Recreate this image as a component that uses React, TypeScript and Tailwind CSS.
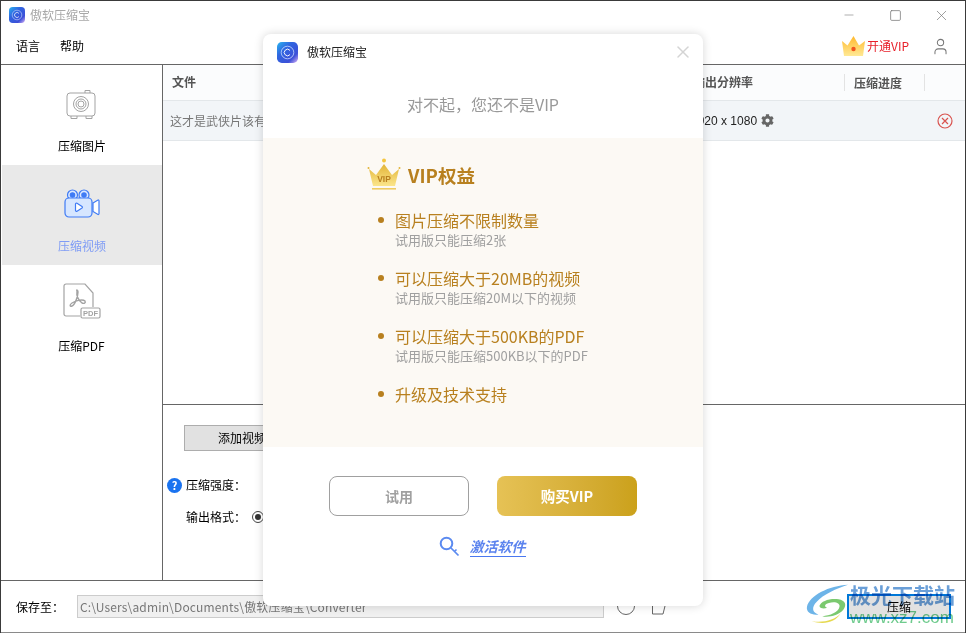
import { Minus, Square, X, User } from "lucide-react";
import { FaCog } from "react-icons/fa";

const benefits = [
  { title: "图片压缩不限制数量", note: "试用版只能压缩2张" },
  { title: "可以压缩大于20MB的视频", note: "试用版只能压缩20M以下的视频" },
  { title: "可以压缩大于500KB的PDF", note: "试用版只能压缩500KB以下的PDF" },
  { title: "升级及技术支持", note: "" },
];

const AppLogo = ({ size }: { size: number }) => (
  <svg width={size} height={size} viewBox="0 0 22 22">
    <defs>
      <linearGradient id="logoGrad" x1="0" y1="0" x2="1" y2="1">
        <stop offset="0" stopColor="#2bb6f0" />
        <stop offset="0.35" stopColor="#2f66e0" />
        <stop offset="0.75" stopColor="#3d50d8" />
        <stop offset="1" stopColor="#e0b8f8" />
      </linearGradient>
    </defs>
    <rect width="22" height="22" rx="5" fill="url(#logoGrad)" />
    <circle cx="11" cy="11" r="6.6" fill="none" stroke="#cfe0ff" strokeWidth="0.8" />
    <path d="M13.6 8.8a3.4 3.4 0 1 0 0 4.4" fill="none" stroke="#fff" strokeWidth="1" />
  </svg>
);

const CameraIcon = () => (
  <svg width="32" height="30" viewBox="0 0 32 30" fill="none" stroke="#a3a3a3" strokeWidth="1">
    <rect x="1" y="4" width="28" height="23" rx="3" />
    <path d="M19 4V1.500h5V4M5 27v2.500h6V27M20 27v2.500h6V27" />
    <circle cx="15" cy="15" r="7.500" />
    <circle cx="15" cy="15" r="5" />
    <circle cx="15" cy="15" r="3" />
  </svg>
);

const VideoIcon = () => (
  <svg width="36" height="30" viewBox="0 0 36 30" fill="none" stroke="#3f7bf5" strokeWidth="1.200">
    <circle cx="8.500" cy="6" r="5" fill="#dbe8ff" />
    <circle cx="8.500" cy="6" r="2.200" fill="#3f7bf5" />
    <circle cx="20" cy="6" r="5" fill="#dbe8ff" />
    <circle cx="20" cy="6" r="2.200" fill="#3f7bf5" />
    <rect x="1" y="9" width="27" height="19" rx="4" fill="#d6e6ff" />
    <path d="M11.500 15a1 1 0 0 1 1.500-.8l5 3.300a1 1 0 0 1 0 1.600l-5 3.100a1 1 0 0 1-1.500-.8z" fill="#fff" />
    <path d="M29 14l5-3a.8.8 0 0 1 1 .8v13a.8.8 0 0 1-1 .7l-5-3z" fill="#fff" />
  </svg>
);

const PdfIcon = () => (
  <svg width="38" height="36" viewBox="0 0 38 36" fill="none" stroke="#a3a3a3" strokeWidth="1.200">
    <path d="M17 33H3a2 2 0 0 1-2-2V3a2 2 0 0 1 2-2h19l8 9v14" />
    <path d="M14 8c-1 5 2 10 5 12 2 1 4 0 3-2-2-2-8-1-13 2-3 2-2 4 0 3 3-1 6-10 6-14 0-2-2-3-1-1z" strokeWidth="1.400" />
    <rect x="18" y="25" width="19" height="10" rx="1.500" fill="#fff" />
    <text x="27.500" y="33" textAnchor="middle" fontSize="7.500" fontWeight="700" fill="#a3a3a3" stroke="none" fontFamily="Liberation Sans, sans-serif">PDF</text>
  </svg>
);

const SmallCrown = () => (
  <svg width="23" height="20" viewBox="0 0 23 20">
    <defs>
      <linearGradient id="topCrown" x1="0" y1="0" x2="0" y2="1">
        <stop offset="0" stopColor="#ffb92e" />
        <stop offset="1" stopColor="#ffe995" />
      </linearGradient>
    </defs>
    <path d="M0 5l5.500 4.500L11.500 0l5.500 9.500L23 5l-2 15H2z" fill="url(#topCrown)" />
    <circle cx="11.500" cy="13" r="2.200" fill="#f2551d" />
  </svg>
);

const GoldCrown = () => (
  <svg width="34" height="34" viewBox="0 0 34 34">
    <defs>
      <linearGradient id="goldCrown" x1="0" y1="0" x2="0" y2="1">
        <stop offset="0" stopColor="#e2b437" />
        <stop offset="1" stopColor="#fbe58b" />
      </linearGradient>
    </defs>
    <circle cx="17" cy="2.500" r="2" fill="#f5c63f" />
    <circle cx="1.500" cy="10" r="1" fill="#e2b437" />
    <circle cx="32.500" cy="10" r="1" fill="#e2b437" />
    <path d="M2 11l7 6 8-11 8 11 7-6-4 17H6z" fill="url(#goldCrown)" />
    <rect x="5" y="30" width="24" height="1.600" fill="#efcb62" />
    <text x="17" y="24" textAnchor="middle" fontSize="8.500" fontWeight="700" fill="#b8801f" fontFamily="Liberation Sans, sans-serif">VIP</text>
  </svg>
);

const KeyIcon = () => (
  <svg width="21" height="21" viewBox="0 0 21 21" fill="none" stroke="#5b8af0" strokeWidth="2">
    <circle cx="7.500" cy="7.500" r="5.800" />
    <path d="M12 12l7.500 7.500M15.500 15.500l2-2" strokeWidth="1.700" />
  </svg>
);

const Watermark = () => (
  <div className="absolute left-[806px] top-[580px] flex items-start pointer-events-none mix-blend-multiply">
    <svg width="44" height="44" viewBox="0 0 46 42" className="mt-[2px]">
      <path d="M44 1C24 2 4 12 1 24c-1 6 5 9 12 8C6 30 6 24 11 19 18 11 32 5 44 1z" fill="#6db4e8" />
      <path d="M14 23c2-5 10-8 20-7 7 1 9 6 5 11-5 6-14 8-22 7 8-1 17-4 18-10 1-4-5-6-11-4-5 1-5 4-2 5-3 1-7 1-8-2z" fill="#7bc96f" />
      <path d="M6 39c12 2 24-1 30-8-5 9-17 12-30 8z" fill="#e6d94f" />
    </svg>
    <div className="flex flex-col">
      <span className="text-[21px] leading-[28px] font-bold text-[#6a9fd8]">极光下载站</span>
      <span className="text-[17px] leading-[18px] mt-[1px] text-[#6fcb8e] font-['Liberation_Sans',sans-serif]">www.xz7.com</span>
    </div>
  </div>
);

const VipDialog = () => (
  <div className="absolute left-[263px] top-[34px] w-[440px] h-[572px] bg-white rounded-[8px] shadow-[0_0_10px_rgba(0,0,0,0.16)] flex flex-col">
    <div className="h-[36px] pl-[14px] pr-[10px] pt-[8px] flex items-start">
      <AppLogo size={21} />
      <span className="ml-[9px] text-[12px] leading-[20px] text-[#222]">傲软压缩宝</span>
      <X className="ml-auto" size={20} color="#d4d4d4" strokeWidth={1.800} />
    </div>
    <div className="h-[68px] flex items-center justify-center text-[16px] text-[#999]">
      对不起，您还不是VIP
    </div>
    <div className="h-[309px] bg-[#fcf9f4] pl-[104px] pt-[20px]">
      <div className="flex items-center gap-[7px] h-[34px]">
        <GoldCrown />
        <span className="text-[18.500px] font-bold text-[#b8801f] mt-[2px]">VIP权益</span>
      </div>
      <ul className="mt-[17px] flex flex-col gap-[17px]">
        {benefits.map((item) => (
          <li key={item.title} className="flex">
            <span className="w-[6px] h-[6px] mt-[8px] ml-[11px] mr-[11px] rounded-full bg-[#b8801f]" />
            <div>
              <p className="text-[16px] leading-[22px] text-[#b8801f]">{item.title}</p>
              {item.note && <p className="text-[13px] leading-[20px] mt-[-1px] text-[#a0a0a0]">{item.note}</p>}
            </div>
          </li>
        ))}
      </ul>
    </div>
    <div className="mt-[29px] flex justify-center gap-[28px]">
      <button className="w-[140px] h-[40px] rounded-[8px] border border-[#a0a0a0] bg-white text-[14px] font-bold text-[#a0a0a0]">
        试用
      </button>
      <button className="w-[140px] h-[40px] rounded-[8px] bg-gradient-to-r from-[#e6c255] to-[#cba11a] text-[14.500px] font-bold text-white">
        购买VIP
      </button>
    </div>
    <div className="mt-[20px] flex justify-center items-center gap-[10px] pr-[2px]">
      <KeyIcon />
      <span className="text-[14px] font-bold italic text-[#5b83ee] border-b border-[#4a78f0] leading-[20px]">激活软件</span>
    </div>
  </div>
);

export default function App() {
  return (
    <div className="relative w-[966px] h-[633px] bg-[#3a3a3a] overflow-hidden font-['Noto_Sans_CJK_SC','Noto_Sans',sans-serif]">
      <div className="h-[632px] mt-[1px] mx-[1px] bg-white flex flex-col text-[12px] text-black border-b border-[#8a8a8a]">
        {/* title bar */}
        <div className="h-[31px] flex items-center pl-[8px] pb-[3px] shrink-0">
          <AppLogo size={16} />
          <span className="ml-[5px] text-[#a8a8a8]">傲软压缩宝</span>
          <div className="ml-auto flex items-center">
            <Minus size={14} color="#777" strokeWidth={1} className="mr-[33px]" />
            <Square size={13} color="#777" strokeWidth={1.400} className="mr-[31px]" />
            <X size={17} color="#777" strokeWidth={1} className="mr-[15px]" />
          </div>
        </div>
        {/* menu bar */}
        <div className="h-[33px] shrink-0 border-b border-[#666] flex items-center pl-[15px] pb-[4px]">
          <span>语言</span>
          <span className="ml-[20px]">帮助</span>
          <div className="ml-auto flex items-center mr-[15px]">
            <SmallCrown />
            <span className="ml-[2px] text-[#e8202a]">开通VIP</span>
            <User size={19} color="#777" strokeWidth={1.300} className="ml-[22px]" />
          </div>
        </div>
        <div className="flex-1 flex min-h-0">
          {/* sidebar */}
          <div className="w-[162px] shrink-0 border-r border-[#666] flex flex-col">
            <div className="h-[100px] flex flex-col items-center pt-[24px]">
              <CameraIcon />
              <span className="mt-[18px] leading-[18px] pl-[1px]">压缩图片</span>
            </div>
            <div className="h-[100px] ml-[1px] bg-[#e9e9e9] flex flex-col items-center pt-[24px] text-[#7f9cf5]">
              <VideoIcon />
              <span className="mt-[18px] leading-[18px]">压缩视频</span>
            </div>
            <div className="h-[100px] flex flex-col items-center pt-[18px]">
              <PdfIcon />
              <span className="mt-[18px] leading-[18px]">压缩PDF</span>
            </div>
          </div>
          {/* content */}
          <div className="flex-1 flex flex-col min-w-0">
            <div className="h-[36px] shrink-0 bg-[#fbfcfd] border-b border-[#e3e7ea] flex items-center font-bold text-[#555] pb-[1px]">
              <span className="flex-1 pl-[9px]">文件</span>
              <span className="w-[151px]">输出分辨率</span>
              <span className="w-[81px] h-[17px] leading-[17px] pl-[9px] border-l border-[#e3e3e3] border-r">压缩进度</span>
              <span className="w-[40px]" />
            </div>
            <div className="h-[40px] shrink-0 bg-[#f2f5f8] border-b border-[#e3e7ea] flex items-center">
              <span className="flex-1 pl-[7px] text-[#777]">这才是武侠片该有的样子.mp4</span>
              <span className="w-[234px] flex items-center text-[#222] font-['Liberation_Sans',sans-serif] text-[12px]">
                1920 x 1080
                <FaCog size={13} color="#666" className="ml-[4px]" />
              </span>
              <span className="w-[40px] flex justify-start pl-[12px]">
                <svg width="16" height="16" viewBox="0 0 16 16" fill="none" stroke="#d9534f" strokeWidth="1.200">
                  <circle cx="8" cy="8" r="7" />
                  <path d="M5 5l6 6M11 5l-6 6" />
                </svg>
              </span>
            </div>
            <div className="flex-1" />
            {/* options */}
            <div className="h-[176px] shrink-0 border-t border-[#666] pt-[20px]">
              <button className="ml-[21px] w-[120px] h-[26px] bg-[#e1e1e1] border border-[#adadad] text-left pl-[33px]">
                添加视频
              </button>
              <div className="mt-[24px] ml-[4px] flex items-center h-[20px]">
                <span className="w-[15px] h-[15px] rounded-full bg-[#1a73f0] flex items-center justify-center text-white text-[11px] font-bold leading-none">?</span>
                <span className="ml-[4px]">压缩强度：</span>
              </div>
              <div className="mt-[12px] ml-[23px] flex items-center h-[20px]">
                <span>输出格式：</span>
                <span className="ml-[6px] w-[12px] h-[12px] rounded-full border border-[#444] flex items-center justify-center">
                  <span className="w-[6px] h-[6px] rounded-full bg-[#333]" />
                </span>
              </div>
            </div>
          </div>
        </div>
        {/* save bar */}
        <div className="h-[52px] shrink-0 border-t border-[#666] flex items-center pl-[15px]">
          <span className="w-[61px]">保存至：</span>
          <div className="w-[527px] h-[23px] bg-[#f0f0f0] border border-[#ccc] pl-[2px] leading-[21px] text-[#777] text-[12px] tracking-[0.15px]">
            C:\Users\admin\Documents\傲软压缩宝\Converter
          </div>
          <span className="ml-[13px] w-[18px] h-[18px] rounded-full border border-[#666] mt-[-2px]" />
          <svg width="16" height="19" viewBox="0 0 16 19" fill="none" stroke="#666" strokeWidth="1" className="ml-[16px] mt-[-2px]">
            <path d="M1.500 4v14h10.500l3-12" />
          </svg>
          <button className="ml-[180px] w-[104px] h-[25px] bg-[#e1e1e1] border-2 border-[#0078d7]">压缩</button>
        </div>
      </div>
      <Watermark />
      <VipDialog />
    </div>
  );
}
